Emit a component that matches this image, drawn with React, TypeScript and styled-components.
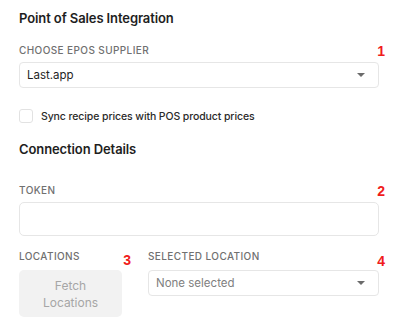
import React from 'react';
import styled, { createGlobalStyle } from 'styled-components';

const GlobalStyle = createGlobalStyle`
  html, body {
    margin: 0;
    padding: 0;
    background: #ffffff;
  }
  body {
    font-family: Inter, 'Noto Sans', sans-serif;
    color: #1e1e1e;
  }
`;

const Page = styled.div`
  width: 360px;
  padding: 10px 26px 0 19px;
  display: flex;
  flex-direction: column;
`;

const SectionTitle = styled.div`
  font-size: 13px;
  line-height: 16px;
  font-weight: 600;
  letter-spacing: -0.1px;
  color: #1e1e1e;
  margin-bottom: ${(props: { gap: number }) => props.gap}px;
`;

const Field = styled.div`
  display: flex;
  flex-direction: column;
  position: relative;
  flex: ${(props: { grow?: boolean }) => (props.grow ? 1 : 'none')};
`;

const Label = styled.div`
  font-size: 10px;
  line-height: 12px;
  font-weight: 500;
  letter-spacing: 0.04em;
  text-transform: uppercase;
  color: #707070;
  margin-bottom: ${(props: { space?: number }) => props.space ?? 6}px;
`;

const Marker = styled.span`
  position: absolute;
  top: ${(props: { top: number; right: number }) => props.top}px;
  right: ${(props: { top: number; right: number }) => props.right}px;
  font-size: 14px;
  line-height: 14px;
  font-weight: 700;
  color: #f01c1c;
  font-family: 'Liberation Sans', Arial, sans-serif;
`;

const SelectBox = styled.div`
  height: 26px;
  box-sizing: border-box;
  border: 1px solid #e6e6e6;
  border-radius: 4px;
  display: flex;
  align-items: center;
  justify-content: space-between;
  padding: 0 13px 0 7px;
  font-size: 11.5px;
  color: ${(props: { muted?: boolean }) => (props.muted ? '#808080' : '#1e1e1e')};
`;

const Caret = styled.span`
  width: 0;
  height: 0;
  border-left: 4px solid transparent;
  border-right: 4px solid transparent;
  border-top: 4px solid #6b6b6b;
`;

const CheckRow = styled.label`
  display: flex;
  align-items: center;
  gap: 8px;
  margin: 21px 0 18px;
  font-size: 10.5px;
  font-weight: 500;
  letter-spacing: -0.1px;
  color: #2a2a2a;
`;

const CheckBox = styled.span`
  width: 14px;
  height: 14px;
  box-sizing: border-box;
  border: 1px solid #e2e2e2;
  border-radius: 3px;
`;

const TextInput = styled.div`
  height: 34px;
  box-sizing: border-box;
  border: 1px solid #e6e6e6;
  border-radius: 5px;
`;

const Row = styled.div`
  display: flex;
  gap: 26px;
  margin-top: 14px;
`;

const FetchButton = styled.div`
  width: 103px;
  height: 47px;
  box-sizing: border-box;
  background: #f2f2f2;
  border-radius: 5px;
  display: flex;
  align-items: center;
  justify-content: center;
  text-align: center;
  font-size: 12px;
  line-height: 17px;
  color: #a6a6a6;
`;

const App = () => {
  return (
    <React.Fragment>
      <GlobalStyle />
      <Page>
        <SectionTitle gap={18}>Point of Sales Integration</SectionTitle>
        <Field>
          <Label>Choose EPOS supplier</Label>
          <Marker top={0} right={-6}>1</Marker>
          <SelectBox>
            Last.app
            <Caret />
          </SelectBox>
        </Field>
        <CheckRow>
          <CheckBox />
          Sync recipe prices with POS product prices
        </CheckRow>
        <SectionTitle gap={27}>Connection Details</SectionTitle>
        <Field>
          <Label>Token</Label>
          <Marker top={0} right={-6}>2</Marker>
          <TextInput />
        </Field>
        <Row>
          <Field>
            <Label space={8}>Locations</Label>
            <Marker top={3} right={-9}>3</Marker>
            <FetchButton>
              Fetch
              <br />
              Locations
            </FetchButton>
          </Field>
          <Field grow>
            <Label space={8}>Selected location</Label>
            <Marker top={4} right={-6}>4</Marker>
            <SelectBox muted>
              None selected
              <Caret />
            </SelectBox>
          </Field>
        </Row>
      </Page>
    </React.Fragment>
  );
};

export default App;
